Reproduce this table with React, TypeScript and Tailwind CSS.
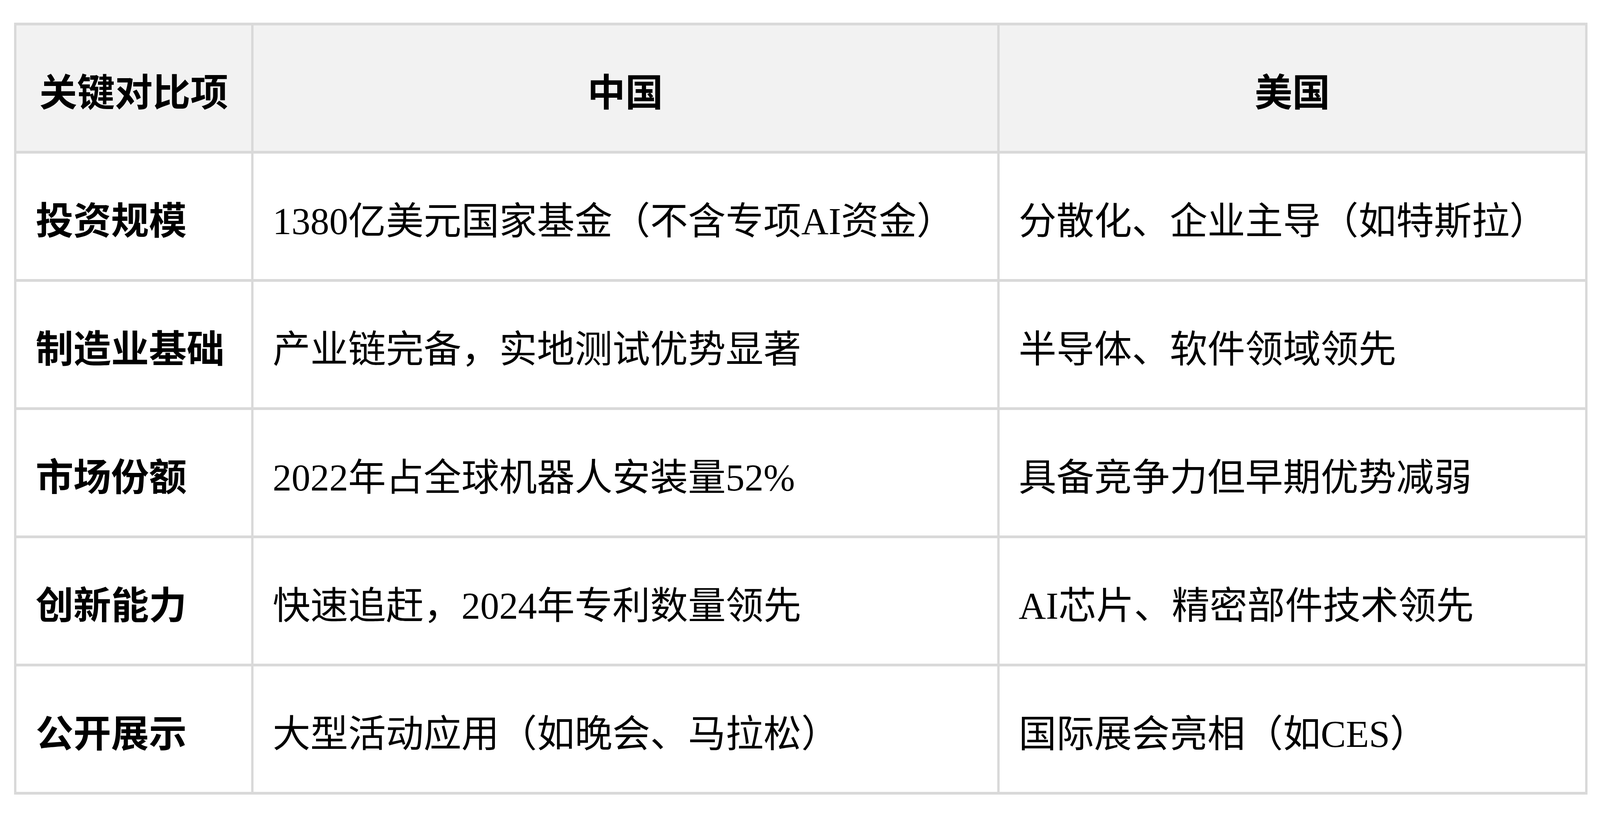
import React from "react";

const rows: [string, string, string][] = [
  ["投资规模", "1380亿美元国家基金（不含专项AI资金）", "分散化、企业主导（如特斯拉）"],
  ["制造业基础", "产业链完备，实地测试优势显著", "半导体、软件领域领先"],
  ["市场份额", "2022年占全球机器人安装量52%", "具备竞争力但早期优势减弱"],
  ["创新能力", "快速追赶，2024年专利数量领先", "AI芯片、精密部件技术领先"],
  ["公开展示", "大型活动应用（如晚会、马拉松）", "国际展会亮相（如CES）"],
];

// 横向尺寸按窗口宽度比例（vw / fr），纵向用固定像素行高
const cell = "flex h-[328px] items-center border-r-[6px] border-b-[7px] border-[#d9d9d9] pt-[28px]";

export default function App() {
  return (
    <div
      className="min-h-screen w-full bg-white pt-[58px] pl-[0.88vw] text-[2.36vw] leading-none text-black"
      style={{ fontFamily: '"Liberation Serif", "Noto Sans CJK SC", serif' }}
    >
      <div className="grid w-[98.34vw] grid-cols-[840fr_2644fr_2084fr] border-t-[7px] border-l-[6px] border-[#d9d9d9]">
        <div className={`${cell} justify-center bg-[#f2f2f2] font-bold`}>关键对比项</div>
        <div className={`${cell} justify-center bg-[#f2f2f2] font-bold`}>中国</div>
        <div className={`${cell} justify-center bg-[#f2f2f2] font-bold`}>美国</div>
        {rows.map(([k, cn, us]) => (
          <React.Fragment key={k}>
            <div className={`${cell} px-[1.2vw] font-bold`}>{k}</div>
            <div className={`${cell} px-[1.2vw]`}>{cn}</div>
            <div className={`${cell} px-[1.2vw]`}>{us}</div>
          </React.Fragment>
        ))}
      </div>
    </div>
  );
}
